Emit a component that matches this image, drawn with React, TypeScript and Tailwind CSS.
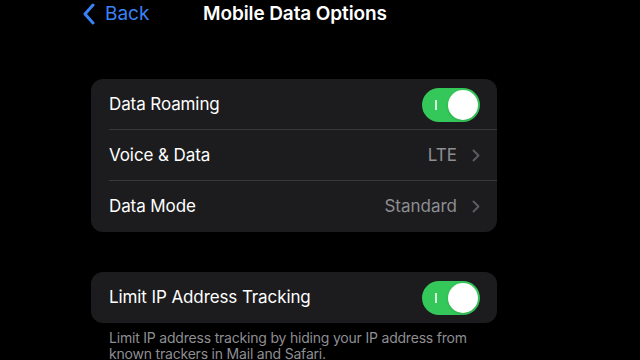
import React from 'react';

const Toggle: React.FC = () => (
  <div className="relative w-[58px] h-[34px] rounded-full bg-[#34c759] flex items-center shrink-0">
    <div className="absolute left-[13px] top-[12px] w-[1.5px] h-[10px] bg-white/80" />
    <div className="absolute right-[2px] top-[2px] w-[30px] h-[30px] rounded-full bg-white shadow" />
  </div>
);

const Chevron: React.FC = () => (
  <svg width="8" height="13" viewBox="0 0 8 13" fill="none" className="ml-[15px]">
    <path d="M1.5 1.5L6.5 6.5L1.5 11.5" stroke="#5b5b60" strokeWidth="2" strokeLinecap="round" strokeLinejoin="round" />
  </svg>
);

const Row: React.FC<{ label: string; last?: boolean; children: React.ReactNode }> = ({ label, last, children }) => (
  <div className="relative h-[51px] flex items-center pl-[18px] pr-[17px]">
    <span className="text-[17px] text-white flex-1 tracking-[-0.1px]">{label}</span>
    {children}
    {!last && <div className="absolute left-[18px] right-0 bottom-0 h-px bg-[#38383a]" />}
  </div>
);

export default function App() {
  return (
    <div className="w-[640px] h-[360px] bg-black overflow-hidden" style={{ fontFamily: 'Inter, "Noto Sans", sans-serif' }}>
      <div className="relative h-[30px] flex items-center">
        <div className="absolute left-[82px] top-[3px] flex items-center">
          <svg width="14" height="22" viewBox="0 0 14 22" fill="none">
            <path d="M11 2L3 11L11 20" stroke="#3a82f7" strokeWidth="3" strokeLinecap="round" strokeLinejoin="round" />
          </svg>
          <span className="ml-[9px] text-[19px] leading-[22px] text-[#3a82f7]">Back</span>
        </div>
        <div className="absolute left-[203px] top-[3px] text-[19px] leading-[22px] font-semibold text-white tracking-[-0.1px]">Mobile Data Options</div>
      </div>

      <div className="ml-[91px] w-[406px] mt-[49px] bg-[#1c1c1e] rounded-[12px]">
        <Row label="Data Roaming">
          <Toggle />
        </Row>
        <Row label="Voice & Data">
          <span className="text-[17px] text-[#8e8e93]">LTE</span>
          <Chevron />
        </Row>
        <Row label="Data Mode" last>
          <span className="text-[17px] text-[#8e8e93]">Standard</span>
          <Chevron />
        </Row>
      </div>

      <div className="ml-[91px] w-[406px] mt-[40px] bg-[#1c1c1e] rounded-[12px]">
        <Row label="Limit IP Address Tracking" last>
          <Toggle />
        </Row>
      </div>

      <p className="ml-[109px] mt-[7px] w-[380px] text-[14px] leading-[16px] tracking-[-0.2px] text-[#8e8e93]">
        Limit IP address tracking by hiding your IP address from known trackers in Mail and Safari.
      </p>
    </div>
  );
}
